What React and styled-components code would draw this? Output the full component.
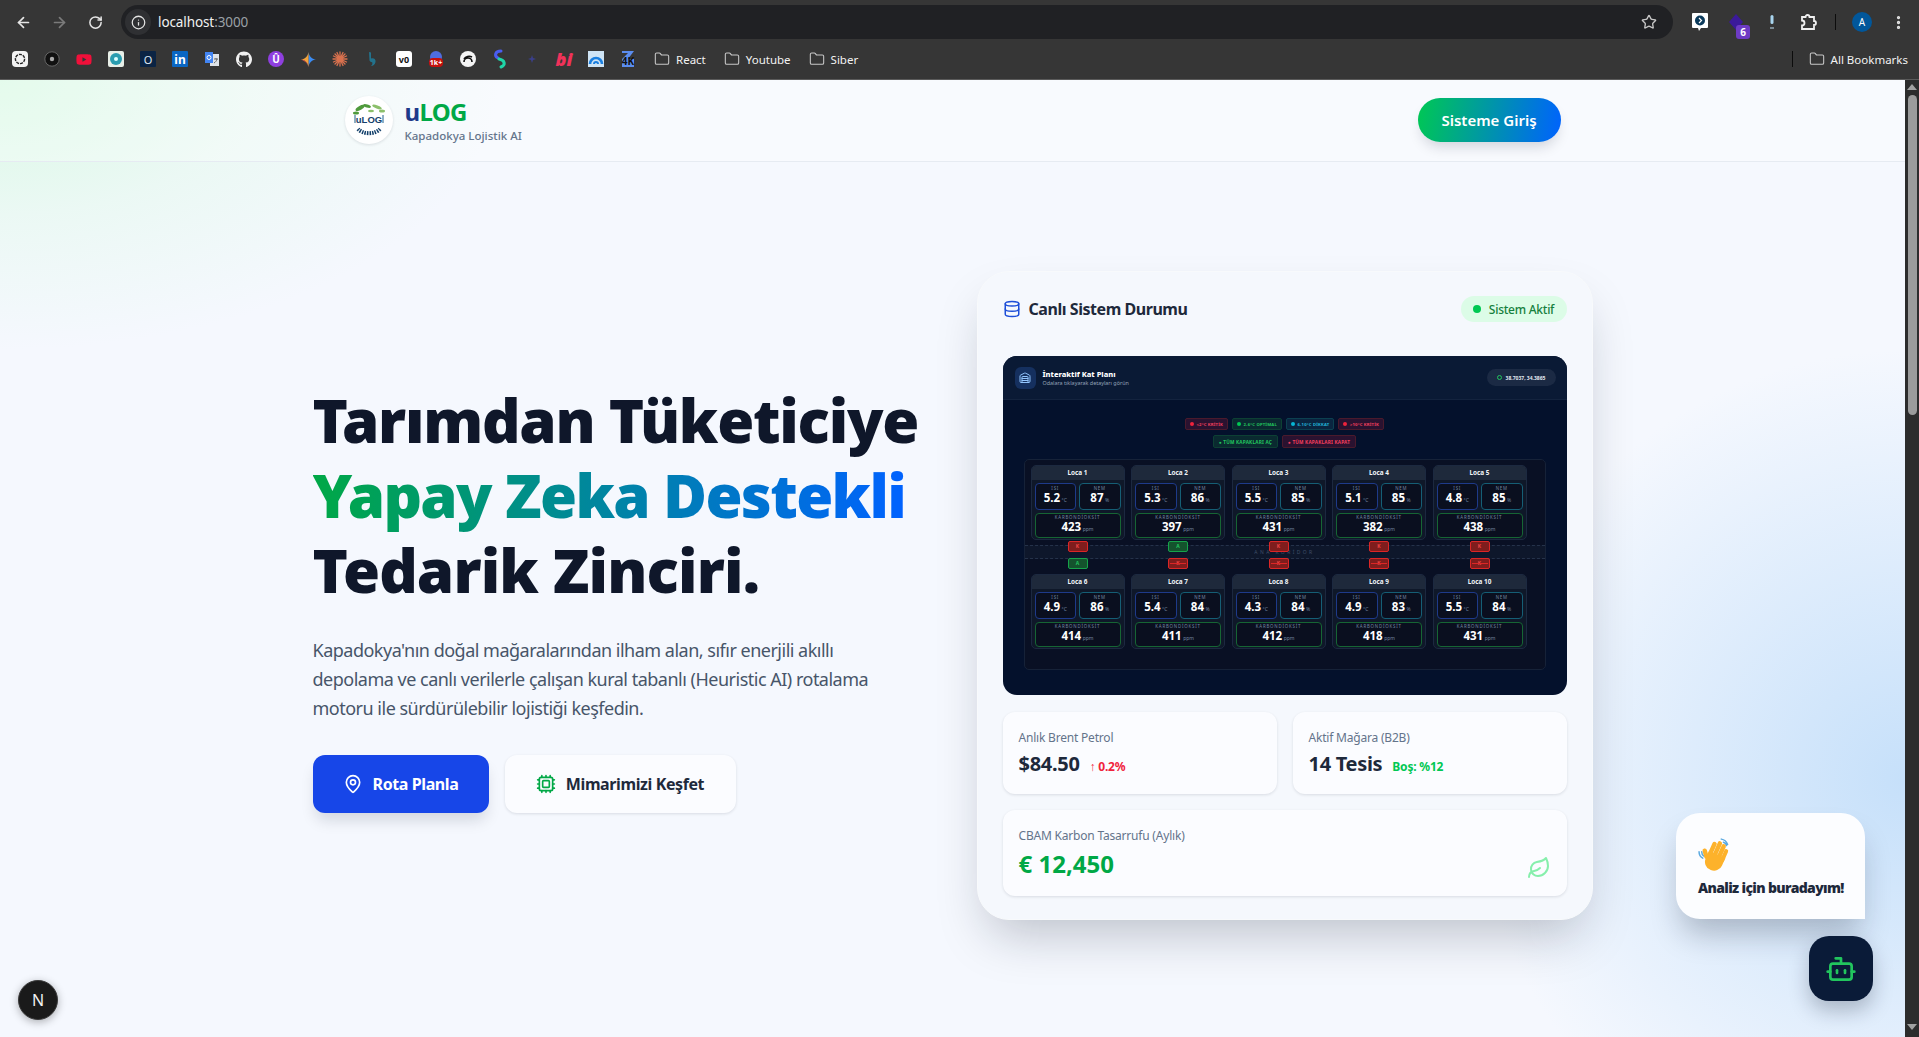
import React from "react";
import styled, { createGlobalStyle } from "styled-components";
import {
  ArrowLeft,
  ArrowRight,
  RotateCw,
  Info,
  Star,
  Folder,
  MapPin,
  Cpu,
  Database,
  Leaf,
  Bot,
  Warehouse,
  EllipsisVertical,
} from "lucide-react";
import { FaGithub, FaYoutube } from "react-icons/fa";

const ROOMS = [
  { name: "Loca 1", temp: "5.2", hum: 87, co2: 423 },
  { name: "Loca 2", temp: "5.3", hum: 86, co2: 397 },
  { name: "Loca 3", temp: "5.5", hum: 85, co2: 431 },
  { name: "Loca 4", temp: "5.1", hum: 85, co2: 382 },
  { name: "Loca 5", temp: "4.8", hum: 85, co2: 438 },
  { name: "Loca 6", temp: "4.9", hum: 86, co2: 414 },
  { name: "Loca 7", temp: "5.4", hum: 84, co2: 411 },
  { name: "Loca 8", temp: "4.3", hum: 84, co2: 412 },
  { name: "Loca 9", temp: "4.9", hum: 83, co2: 418 },
  { name: "Loca 10", temp: "5.5", hum: 84, co2: 431 },
];

const TOP_DOORS = ["K", "A", "K", "K", "K"];
const BOTTOM_DOORS = ["A", "K", "K", "K", "K"];

export default function App() {
  return (
    <Frame>
      <GlobalStyle />
      <BrowserChrome />
      <Viewport>
        <Page>
          <NavBar>
            <NavInner>
              <Brand>
                <LogoCircle>
                  <LogoMark />
                </LogoCircle>
                <BrandText>
                  <BrandName>
                    <span>u</span>LOG
                  </BrandName>
                  <BrandSub>Kapadokya Lojistik AI</BrandSub>
                </BrandText>
              </Brand>
              <LoginButton>Sisteme Giriş</LoginButton>
            </NavInner>
          </NavBar>
          <Main>
            <Hero>
              <HeroCopy>
                <Title>
                  Tarımdan Tüketiciye
                  <br />
                  <GradientText>Yapay Zeka Destekli</GradientText>
                  <br />
                  <TitleEnd>Tedarik Zinciri.</TitleEnd>
                </Title>
                <Lead>
                  Kapadokya'nın doğal mağaralarından ilham alan, sıfır enerjili akıllı
                  depolama ve canlı verilerle çalışan kural tabanlı (Heuristic AI) rotalama
                  motoru ile sürdürülebilir lojistiği keşfedin.
                </Lead>
                <Actions>
                  <PrimaryButton>
                    <MapPin size={20} strokeWidth={2} />
                    Rota Planla
                  </PrimaryButton>
                  <SecondaryButton>
                    <Cpu size={20} strokeWidth={2} color="#00a846" />
                    Mimarimizi Keşfet
                  </SecondaryButton>
                </Actions>
              </HeroCopy>
              <StatusCard />
            </Hero>
          </Main>
          <DevBadge>N</DevBadge>
          <ChatBubble>
            <WaveHand />
            <ChatText>Analiz için buradayım!</ChatText>
          </ChatBubble>
          <ChatButton>
            <Bot size={32} strokeWidth={2} color="#22c55e" />
          </ChatButton>
        </Page>
        <ScrollTrack>
          <ScrollArrow />
          <ScrollThumb />
          <ScrollArrow $down />
        </ScrollTrack>
      </Viewport>
    </Frame>
  );
}

function BrowserChrome() {
  return (
    <ChromeBar>
      <Toolbar>
        <ToolButton>
          <ArrowLeft size={17} strokeWidth={2.4} />
        </ToolButton>
        <ToolButton $dim>
          <ArrowRight size={17} strokeWidth={2.4} />
        </ToolButton>
        <ToolButton>
          <RotateCw size={15} strokeWidth={2.4} />
        </ToolButton>
        <UrlBar>
          <SiteInfo>
            <Info size={15} strokeWidth={2} />
          </SiteInfo>
          <UrlText>
            localhost<span>:3000</span>
          </UrlText>
          <Star size={16} strokeWidth={2} color="#c7c7c7" />
        </UrlBar>
        <Extensions>
          <ToolButton>
            <svg width="16" height="18" viewBox="0 0 16 18">
              <path d="M1 0h14a1 1 0 0 1 1 1v13a1 1 0 0 1-1 1H9l-2 3-1-3H1a1 1 0 0 1-1-1V1a1 1 0 0 1 1-1z" fill="#fff" />
              <circle cx="8" cy="7.500" r="5" fill="#0b3a5b" />
              <path d="M7 5l2.500 2.500L7 10" fill="none" stroke="#fff" strokeWidth="1.200" />
            </svg>
          </ToolButton>
          <ToolButton>
            <svg width="16" height="16" viewBox="0 0 16 16">
              <path d="M8 0l7 8-7 8-7-8z" fill="#3b1a9a" />
            </svg>
            <ExtensionBadge>6</ExtensionBadge>
          </ToolButton>
          <ToolButton>
            <svg width="6" height="14" viewBox="0 0 6 14">
              <rect x="1.500" y="0" width="3" height="9" rx="1.500" fill="#a8d4ee" />
              <rect x="1" y="12" width="4" height="2" fill="#7a8a94" />
            </svg>
          </ToolButton>
          <ToolButton>
            <svg width="17" height="18" viewBox="0 0 17 18" fill="none" stroke="#f0f0f0" strokeWidth="1.800">
              <path d="M2 4h3.500a2 2 0 0 1 4 0H14v4a2 2 0 0 1 0 4v4H2v-3.500a1.800 1.800 0 0 0 0-5z" />
            </svg>
          </ToolButton>
          <ToolDivider />
          <ToolButton>
            <Avatar>A</Avatar>
          </ToolButton>
          <ToolButton>
            <EllipsisVertical size={17} strokeWidth={2.6} />
          </ToolButton>
        </Extensions>
      </Toolbar>
      <BookmarkBar>
        <Favicons />
        <BookmarkFolder>
          <Folder size={16} strokeWidth={1.6} />
          React
        </BookmarkFolder>
        <BookmarkFolder>
          <Folder size={16} strokeWidth={1.6} />
          Youtube
        </BookmarkFolder>
        <BookmarkFolder>
          <Folder size={16} strokeWidth={1.6} />
          Siber
        </BookmarkFolder>
        <AllBookmarks>
          <BookmarkDivider />
          <BookmarkFolder>
            <Folder size={16} strokeWidth={1.6} />
            All Bookmarks
          </BookmarkFolder>
        </AllBookmarks>
      </BookmarkBar>
    </ChromeBar>
  );
}

function Favicons() {
  return (
    <FaviconRow>
      <Fav $bg="#f2f2f2" $radius="4px">
        <svg width="12" height="12" viewBox="0 0 12 12">
          <circle cx="6" cy="6" r="4.600" fill="none" stroke="#222" strokeWidth="1.400" strokeDasharray="3 1" />
        </svg>
      </Fav>
      <Fav>
        <svg width="16" height="16" viewBox="0 0 16 16">
          <circle cx="8" cy="8" r="7.200" fill="#111" stroke="#666" />
          <circle cx="8" cy="8" r="2.200" fill="#aaa" />
        </svg>
      </Fav>
      <Fav $color="#f0103a">
        <FaYoutube size={17} />
      </Fav>
      <Fav $bg="#e8efe8" $radius="2px">
        <svg width="14" height="14" viewBox="0 0 14 14">
          <circle cx="7" cy="7" r="6" fill="#2a9db0" />
          <circle cx="7" cy="7" r="2" fill="#dff" />
        </svg>
      </Fav>
      <Fav $bg="#0b2444" $color="#dfe8f5" $radius="1px" $size="11px" $thin>O</Fav>
      <Fav $bg="#0a66c2" $color="#fff" $radius="1px" $size="12px">in</Fav>
      <Fav>
        <svg width="16" height="16" viewBox="0 0 16 16">
          <path d="M6 3h9v12H6z" fill="#dfe3e8" />
          <path d="M1 1h8v11H1z" fill="#4285f4" />
          <circle cx="5" cy="6.500" r="2" fill="none" stroke="#fff" strokeWidth="1" />
          <path d="M10 8h4M12 7v1M13 8c-.5 2-1.500 3-3 4" fill="none" stroke="#666" strokeWidth="1" />
        </svg>
      </Fav>
      <Fav $color="#f0f0f0">
        <FaGithub size={17} />
      </Fav>
      <Fav $bg="#8f3fe0" $color="#fff" $radius="50%">Û</Fav>
      <Fav>
        <svg width="15" height="15" viewBox="0 0 16 16">
          <path d="M8 0c.6 4.400 3.200 7.400 8 8-4.800.6-7.400 3.600-8 8z" fill="#3b8cf2" />
          <path d="M8 0C7.400 4.400 4.800 7.400 0 8c4.800.6 7.400 3.600 8 8z" fill="#f2a33b" />
          <path d="M8 16c-.6-4.400-3.200-7.400-8-8 4.800 2 7 4 8 8z" fill="#e9554a" />
        </svg>
      </Fav>
      <Fav>
        <svg width="16" height="16" viewBox="0 0 16 16" stroke="#d9714e" strokeWidth="1.300" strokeLinecap="round">
          <path d="M8 1v14M1 8h14M3 3l10 10M13 3L3 13M5 1.500l6 13M11 1.500l-6 13M1.500 5l13 6M14.500 5l-13 6" />
        </svg>
      </Fav>
      <Fav>
        <svg width="10" height="16" viewBox="0 0 10 16">
          <path d="M2 1l2 .5v6c3-1 5 1 4.500 3.500C8 14 5 15.500 4 15c1-1 2-2.500 1-4-1 .5-2-.5-2.500-1.500z" fill="#23728c" />
        </svg>
      </Fav>
      <Fav $bg="#fff" $color="#111" $radius="3px" $size="9px">v0</Fav>
      <Fav>
        <svg width="16" height="16" viewBox="0 0 16 16">
          <circle cx="8" cy="6" r="6" fill="#4e6de0" />
          <rect x="1" y="7" width="14" height="9" rx="4" fill="#c4100d" />
        </svg>
        <FavOverlay>1k+</FavOverlay>
      </Fav>
      <Fav>
        <svg width="16" height="16" viewBox="0 0 16 16">
          <circle cx="8" cy="8" r="8" fill="#f5f5f5" />
          <path d="M4 11a4 4 0 0 1 8 0M4 8a6 6 0 0 1 8-2" fill="none" stroke="#111" strokeWidth="1.600" />
        </svg>
      </Fav>
      <Fav>
        <svg width="16" height="20" viewBox="0 0 16 20" fill="none" strokeWidth="3" strokeLinecap="round">
          <path d="M9 2C3 2 2 7 6 9" stroke="#4a5df0" />
          <path d="M7 10c6 1 7 6 2 8" stroke="#1fd6a8" />
        </svg>
      </Fav>
      <Fav>
        <svg width="8" height="8" viewBox="0 0 8 8">
          <path d="M4 0l1 3 3 1-3 1-1 3-1-3-3-1 3-1z" fill="#3a3f8a" />
        </svg>
      </Fav>
      <Fav $color="#f0325a" $size="18px" $heavy>bi</Fav>
      <Fav>
        <svg width="16" height="18" viewBox="0 0 16 18">
          <rect x="0" y="1" width="16" height="16" fill="#cfe4f5" />
          <path d="M2 14a6 6 0 0 1 12 0" fill="none" stroke="#1a7fe0" strokeWidth="2.600" />
          <path d="M6 14a2 2 0 0 1 4 0" fill="none" stroke="#1a7fe0" strokeWidth="2" />
        </svg>
      </Fav>
      <Fav>
        <svg width="16" height="18" viewBox="0 0 16 18">
          <path d="M2 1h12L8 9H14v8H2V9l6-6H2z" fill="#5b8def" />
        </svg>
        <FavOverlay $dark>4K</FavOverlay>
      </Fav>
    </FaviconRow>
  );
}

function StatusCard() {
  return (
    <Card>
      <CardHeader>
        <CardTitle>
          <Database size={18} strokeWidth={2} color="#1d4ed8" />
          Canlı Sistem Durumu
        </CardTitle>
        <ActivePill>
          <ActiveDot />
          Sistem Aktif
        </ActivePill>
      </CardHeader>
      <FloorPlan />
      <StatGrid>
        <StatBox>
          <StatLabel>Anlık Brent Petrol</StatLabel>
          <StatLine>
            <StatValue>$84.50</StatValue>
            <StatDelta $color="#f0233c">↑ 0.2%</StatDelta>
          </StatLine>
        </StatBox>
        <StatBox>
          <StatLabel>Aktif Mağara (B2B)</StatLabel>
          <StatLine>
            <StatValue>14 Tesis</StatValue>
            <StatDelta $color="#00c853">Boş: %12</StatDelta>
          </StatLine>
        </StatBox>
        <SavingsBox>
          <div>
            <StatLabel>CBAM Karbon Tasarrufu (Aylık)</StatLabel>
            <SavingsValue>€ 12,450</SavingsValue>
          </div>
          <Leaf size={24} strokeWidth={2} color="#86efac" />
        </SavingsBox>
      </StatGrid>
    </Card>
  );
}

function FloorPlan() {
  return (
    <Plan>
      <PlanHeader>
        <PlanHeading>
          <PlanIcon>
            <Warehouse size={12} strokeWidth={2} color="#93c5fd" />
          </PlanIcon>
          <div>
            <PlanTitle>İnteraktif Kat Planı</PlanTitle>
            <PlanSub>Odalara tıklayarak detayları görün</PlanSub>
          </div>
        </PlanHeading>
        <CoordPill>
          <CoordDot />
          38.7037, 34.3865
        </CoordPill>
      </PlanHeader>
      <LegendRow>
        <LegendChip $tone="red">
          <LegendDot $tone="red" />
          &lt;2°C KRİTİK
        </LegendChip>
        <LegendChip $tone="green">
          <LegendDot $tone="green" />
          2-6°C OPTİMAL
        </LegendChip>
        <LegendChip $tone="cyan">
          <LegendDot $tone="cyan" />
          6-10°C DİKKAT
        </LegendChip>
        <LegendChip $tone="red">
          <LegendDot $tone="red" />
          &gt;10°C KRİTİK
        </LegendChip>
      </LegendRow>
      <LegendRow $second>
        <CommandChip $tone="green">● TÜM KAPAKLARI AÇ</CommandChip>
        <CommandChip $tone="red">● TÜM KAPAKLARI KAPAT</CommandChip>
      </LegendRow>
      <PlanFloor>
        <RoomRow>
          {ROOMS.slice(0, 5).map((room) => (
            <Room room={room} key={room.name} />
          ))}
        </RoomRow>
        <Corridor>
          ANA KORİDOR
          <DoorRow $top>
            {TOP_DOORS.map((door, i) => (
              <DoorSlot key={i}>
                <Door $open={door === "A"}>{door}</Door>
              </DoorSlot>
            ))}
          </DoorRow>
          <DoorRow>
            {BOTTOM_DOORS.map((door, i) => (
              <DoorSlot key={i}>
                <Door $open={door === "A"} $strike={door === "K"}>
                  {door}
                </Door>
              </DoorSlot>
            ))}
          </DoorRow>
        </Corridor>
        <RoomRow>
          {ROOMS.slice(5).map((room) => (
            <Room room={room} key={room.name} />
          ))}
        </RoomRow>
      </PlanFloor>
    </Plan>
  );
}

const Room = ({ room }) => (
  <RoomBox>
    <RoomHead>{room.name}</RoomHead>
    <RoomBody>
      <Sensor $color="#1e3a8a">
        <SensorLabel>ISI</SensorLabel>
        <SensorValue>
          {room.temp}
          <small>°C</small>
        </SensorValue>
      </Sensor>
      <Sensor $color="#155e75">
        <SensorLabel>NEM</SensorLabel>
        <SensorValue>
          {room.hum}
          <small>%</small>
        </SensorValue>
      </Sensor>
      <WideSensor $color="#166534">
        <SensorLabel>KARBONDİOKSİT</SensorLabel>
        <SensorValue>
          {room.co2}
          <small>ppm</small>
        </SensorValue>
      </WideSensor>
    </RoomBody>
  </RoomBox>
);

const LogoMark = () => (
  <svg width="36" height="36" viewBox="0 0 36 36">
    <g fill="#4f9a3c">
      <ellipse cx="9" cy="6" rx="5" ry="2" transform="rotate(-30 9 6)" />
      <ellipse cx="16" cy="4" rx="4" ry="1.500" transform="rotate(15 16 4)" />
      <ellipse cx="26" cy="5" rx="5" ry="1.600" fill="#8bbf6a" transform="rotate(20 26 5)" />
      <ellipse cx="31" cy="9" rx="3" ry="1.500" fill="#8bbf6a" />
      <ellipse cx="5" cy="11" rx="3" ry="1.500" />
      <ellipse cx="20" cy="9" rx="3" ry="1.200" fill="#8bbf6a" />
    </g>
    <path d="M4 13v8M32 13v8" stroke="#1f5f8b" strokeWidth="1" />
    <text x="18" y="21" textAnchor="middle" fontSize="9.500" fontWeight="700" fontFamily="Liberation Sans" fill="#14406b">
      uLOG
    </text>
    <path d="M7 27a13 9 0 0 0 22 0" fill="none" stroke="#14406b" strokeWidth="4" strokeDasharray="1.500 1" />
  </svg>
);

const WaveHand = () => (
  <WaveIcon width="36" height="36" viewBox="0 0 34 34">
    <g fill="none" stroke="#5aa9e0" strokeWidth="1.400" strokeLinecap="round">
      <path d="M22 2c3 .5 5 2.500 6 5M24 5c1.500.4 2.500 1.400 3 3" />
      <path d="M1 14c0 3 1.500 5 3.500 6M3.500 14c0 2 .7 3.200 2 4" />
    </g>
    <g transform="rotate(24 17 18)" fill="#fdb22b">
      <rect x="9" y="6" width="4.200" height="15" rx="2.100" />
      <rect x="13.400" y="3.500" width="4.200" height="17" rx="2.100" />
      <rect x="17.800" y="4.500" width="4.200" height="16" rx="2.100" />
      <rect x="22" y="8" width="3.800" height="13" rx="1.900" />
      <rect x="5" y="15" width="4.200" height="10" rx="2.100" transform="rotate(-40 7 20)" />
      <path d="M9 16h16.800v8a8 8 0 0 1-8 8H17a8 8 0 0 1-8-8z" />
    </g>
  </WaveIcon>
);

const GlobalStyle = createGlobalStyle`
  * {
    box-sizing: border-box;
  }

  html,
  body {
    margin: 0;
    height: 100%;
    overflow: hidden;
    font-family: "Noto Sans", "Open Sans", sans-serif;
  }
`;

const Frame = styled.div`
  height: 100vh;
  display: flex;
  flex-direction: column;
  overflow: hidden;
`;

const ChromeBar = styled.header`
  flex: none;
  height: 80px;
  background: #363636;
  border-bottom: 1px solid #5b5b5b;
  color: #e3e3e3;
`;

const Toolbar = styled.div`
  height: 40px;
  padding: 5px 3px 1px 5px;
  display: flex;
  align-items: center;
`;

const ToolButton = styled.div`
  position: relative;
  width: 36px;
  height: 34px;
  flex: none;
  display: flex;
  align-items: center;
  justify-content: center;
  color: ${(p) => (p.$dim ? "#7b7b7b" : "#e6e6e6")};
`;

const UrlBar = styled.div`
  flex: 1;
  height: 34px;
  margin: 0 9px 0 8px;
  padding: 0 16px 0 4px;
  display: flex;
  align-items: center;
  background: #202124;
  border-radius: 17px;
`;

const SiteInfo = styled.div`
  width: 26px;
  height: 26px;
  border-radius: 50%;
  background: #2f3033;
  display: flex;
  align-items: center;
  justify-content: center;
  color: #e3e3e3;
`;

const UrlText = styled.div`
  flex: 1;
  margin-left: 7px;
  font-size: 13.500px;
  letter-spacing: -0.1px;
  color: #f1f1f1;

  span {
    color: #9aa0a6;
  }
`;

const Extensions = styled.div`
  display: flex;
  align-items: center;
`;

const ExtensionBadge = styled.span`
  position: absolute;
  right: 4px;
  bottom: 0;
  width: 14px;
  height: 14px;
  border-radius: 3px;
  background: #6d3bc4;
  color: #fff;
  font-size: 10px;
  font-weight: 700;
  line-height: 14px;
  text-align: center;
`;

const ToolDivider = styled.div`
  width: 1px;
  height: 16px;
  margin: 0 8px 0 9px;
  background: #0c0c0c;
`;

const Avatar = styled.div`
  width: 20px;
  height: 20px;
  border-radius: 50%;
  background: #01579b;
  color: #fff;
  font-size: 10px;
  line-height: 20px;
  text-align: center;
`;

const BookmarkBar = styled.nav`
  height: 38px;
  padding: 0 11px 0 12px;
  display: flex;
  align-items: center;
  gap: 18px;
  font-size: 11.500px;
  color: #f2f2f2;
`;

const FaviconRow = styled.div`
  display: flex;
  align-items: center;
  gap: 16px;
`;

const Fav = styled.div`
  position: relative;
  width: 16px;
  height: 16px;
  flex: none;
  display: flex;
  align-items: center;
  justify-content: center;
  background: ${(p) => p.$bg || "transparent"};
  border-radius: ${(p) => p.$radius || "0"};
  color: ${(p) => p.$color || "#fff"};
  font-size: ${(p) => p.$size || "10px"};
  font-weight: ${(p) => (p.$heavy ? 900 : p.$thin ? 400 : 700)};
  font-style: ${(p) => (p.$heavy ? "italic" : "normal")};
`;

const FavOverlay = styled.span`
  position: absolute;
  left: 0;
  right: 0;
  bottom: ${(p) => (p.$dark ? "-1px" : "0")};
  text-align: center;
  font-size: ${(p) => (p.$dark ? "10px" : "7px")};
  font-weight: 700;
  color: ${(p) => (p.$dark ? "#111" : "#fff")};
`;

const BookmarkFolder = styled.div`
  display: flex;
  align-items: center;
  gap: 6px;
  white-space: nowrap;

  svg {
    color: #c7c7c7;
  }
`;

const AllBookmarks = styled.div`
  margin-left: auto;
  display: flex;
  align-items: center;
  gap: 16px;
`;

const BookmarkDivider = styled.div`
  width: 1px;
  height: 16px;
  background: #0c0c0c;
`;

const Viewport = styled.div`
  flex: 1;
  min-height: 0;
  display: flex;
`;

const Page = styled.div`
  position: relative;
  flex: 1;
  min-width: 0;
  overflow: hidden;
  background:
    radial-gradient(circle 430px at 1905px 700px, #c6e0fa 0%, rgba(198, 224, 250, 0.55) 45%, rgba(198, 224, 250, 0) 100%),
    radial-gradient(ellipse 500px 270px at 0 0, #d9f9e4 0%, rgba(223, 249, 232, 0.45) 50%, rgba(223, 249, 232, 0) 100%),
    #f5f8fe;
`;

const NavBar = styled.div`
  height: 82px;
  padding-bottom: 2px;
  background: rgba(255, 255, 255, 0.3);
  border-bottom: 1px solid #e6ebf2;
`;

const NavInner = styled.div`
  width: 1280px;
  height: 80px;
  margin: 0 auto;
  padding: 0 32px;
  display: flex;
  align-items: center;
  justify-content: space-between;
`;

const Brand = styled.div`
  display: flex;
  align-items: center;
  gap: 12px;
`;

const LogoCircle = styled.div`
  width: 48px;
  height: 48px;
  border-radius: 50%;
  background: #fff;
  box-shadow: 0 1px 3px rgba(15, 23, 42, 0.12);
  display: flex;
  align-items: center;
  justify-content: center;
`;

const BrandText = styled.div`
  display: flex;
  flex-direction: column;
`;

const BrandName = styled.div`
  font-size: 24px;
  font-weight: 700;
  line-height: 30px;
  letter-spacing: -0.7px;
  color: #00a846;

  span {
    color: #1e3a8a;
  }
`;

const BrandSub = styled.div`
  font-size: 11.500px;
  line-height: 17px;
  font-weight: 500;
  color: #64748b;
`;

const LoginButton = styled.button`
  width: 143px;
  height: 44px;
  border: 0;
  border-radius: 22px;
  background: linear-gradient(100deg, #00c853 0%, #0062ff 100%);
  box-shadow: 0 8px 14px -4px rgba(15, 23, 42, 0.18);
  color: #fff;
  font: 600 15px "Noto Sans", sans-serif;
`;

const Main = styled.main`
  height: 867px;
  display: flex;
  align-items: center;
  justify-content: center;
`;

const Hero = styled.section`
  width: 1280px;
  display: grid;
  grid-template-columns: minmax(0, 1fr) minmax(0, 1fr);
  gap: 48px;
  align-items: center;
`;

const HeroCopy = styled.div`
  padding-top: 5px;
`;

const Title = styled.h1`
  margin: 0;
  font-size: 60px;
  line-height: 75px;
  font-weight: 900;
  letter-spacing: -1.250px;
  color: #0f172a;
  white-space: nowrap;
`;

const GradientText = styled.span`
  letter-spacing: -1.650px;
  background: linear-gradient(90deg, #00a846 0%, #0062ff 100%);
  -webkit-background-clip: text;
  background-clip: text;
  color: transparent;
`;

const TitleEnd = styled.span`
  letter-spacing: -0.850px;
`;

const Lead = styled.p`
  width: 590px;
  margin: 28px 0 32px;
  font-size: 18px;
  line-height: 29px;
  letter-spacing: -0.500px;
  color: #475569;
`;

const Actions = styled.div`
  display: flex;
  gap: 16px;
`;

const PrimaryButton = styled.button`
  width: 176px;
  height: 58px;
  border: 0;
  border-radius: 12px;
  background: #1746e8;
  box-shadow: 0 10px 15px -3px rgba(15, 23, 42, 0.15);
  color: #fff;
  display: flex;
  align-items: center;
  justify-content: center;
  gap: 10px;
  font: 700 16px "Noto Sans", sans-serif;
  letter-spacing: -0.400px;
`;

const SecondaryButton = styled(PrimaryButton)`
  width: 231px;
  background: #fbfcff;
  box-shadow: 0 1px 3px rgba(15, 23, 42, 0.12);
  color: #1e293b;
`;

const Card = styled.article`
  height: 649px;
  padding: 24px 25px;
  border-radius: 32px;
  background: #f5f8fd;
  border: 1px solid #f8fafc;
  box-shadow: 0 25px 50px -12px rgba(15, 23, 42, 0.25);
`;

const CardHeader = styled.div`
  height: 26px;
  margin-bottom: 34px;
  display: flex;
  align-items: center;
  justify-content: space-between;
`;

const CardTitle = styled.h3`
  margin: 0;
  display: flex;
  align-items: center;
  gap: 8px;
  font-size: 16px;
  font-weight: 700;
  letter-spacing: -0.450px;
  color: #1e293b;
`;

const ActivePill = styled.div`
  width: 106px;
  height: 26px;
  border-radius: 13px;
  background: #dcfce7;
  display: flex;
  align-items: center;
  justify-content: center;
  gap: 8px;
  font-size: 12px;
  font-weight: 500;
  letter-spacing: -0.250px;
  color: #15803d;
`;

const ActiveDot = styled.span`
  width: 8px;
  height: 8px;
  border-radius: 50%;
  background: #00c853;
`;

const Plan = styled.div`
  height: 339px;
  border-radius: 14px;
  overflow: hidden;
  background: #04112c;
  color: #fff;
`;

const PlanHeader = styled.div`
  height: 44px;
  padding: 0 11px 0 12px;
  display: flex;
  align-items: center;
  justify-content: space-between;
  background: #0a1a35;
  border-bottom: 1px solid #13233e;
`;

const PlanHeading = styled.div`
  display: flex;
  align-items: center;
  gap: 7px;
`;

const PlanIcon = styled.div`
  width: 21px;
  height: 22px;
  border-radius: 6px;
  background: #15305f;
  display: flex;
  align-items: center;
  justify-content: center;
`;

const PlanTitle = styled.div`
  font-size: 7.500px;
  line-height: 10px;
  font-weight: 800;
`;

const PlanSub = styled.div`
  font-size: 5.400px;
  line-height: 8px;
  color: #94a3b8;
`;

const CoordPill = styled.div`
  width: 69px;
  height: 17px;
  border-radius: 9px;
  background: #1b2a44;
  display: flex;
  align-items: center;
  justify-content: center;
  gap: 4px;
  font-size: 5px;
  font-weight: 700;
  color: #e2e8f0;
`;

const CoordDot = styled.span`
  width: 5px;
  height: 5px;
  border-radius: 50%;
  border: 1px solid #22c55e;
`;

const TONES = {
  red: { bg: "#2a1230", border: "#4a1a2c", text: "#f43f5e", dot: "#ef233c" },
  green: { bg: "#0a2a30", border: "#0d4034", text: "#22c55e", dot: "#00c853" },
  cyan: { bg: "#0a2540", border: "#0c4050", text: "#22b8d8", dot: "#06b6d4" },
};

const LegendRow = styled.div`
  margin-top: ${(p) => (p.$second ? "5px" : "18px")};
  height: ${(p) => (p.$second ? "13px" : "12px")};
  display: flex;
  justify-content: center;
  gap: 4px;
`;

const LegendChip = styled.div`
  padding: 0 4px;
  border-radius: 2px;
  display: flex;
  align-items: center;
  gap: 2.500px;
  font-size: 4.200px;
  font-weight: 700;
  letter-spacing: 0.2px;
  background: ${(p) => TONES[p.$tone].bg};
  border: 1px solid ${(p) => TONES[p.$tone].border};
  color: ${(p) => TONES[p.$tone].text};
`;

const LegendDot = styled.span`
  width: 4px;
  height: 4px;
  border-radius: 50%;
  background: ${(p) => TONES[p.$tone].dot};
`;

const CommandChip = styled(LegendChip)`
  padding: 0 5px;
  font-size: 4.700px;
`;

const PlanFloor = styled.div`
  width: 522px;
  height: 211px;
  margin: 11px 0 0 21px;
  padding: 5px 20px 0 6px;
  border: 1px solid #162238;
  border-radius: 5px;
  background: #091024;
`;

const RoomRow = styled.div`
  display: grid;
  grid-template-columns: repeat(5, 94px);
  column-gap: 6.500px;
`;

const RoomBox = styled.div`
  height: 75px;
  border: 1px solid #1c2940;
  border-radius: 5px;
  overflow: hidden;
  background: #0f1829;
`;

const RoomHead = styled.div`
  height: 13.500px;
  background: #1e293b;
  font-size: 6.400px;
  line-height: 13.500px;
  font-weight: 700;
  text-align: center;
  color: #f1f5f9;
`;

const RoomBody = styled.div`
  padding: 3px 3px;
  display: grid;
  grid-template-columns: 1fr 1fr;
  grid-template-rows: 27px 25px;
  gap: 3px;
`;

const Sensor = styled.div`
  border: 1px solid ${(p) => p.$color};
  border-radius: 4px;
  background: #0a0f1f;
  display: flex;
  flex-direction: column;
  align-items: center;
  justify-content: center;
`;

const WideSensor = styled(Sensor)`
  grid-column: span 2;
`;

const SensorLabel = styled.div`
  font-size: 4.400px;
  line-height: 6px;
  letter-spacing: 0.800px;
  color: #7587a0;
`;

const SensorValue = styled.div`
  font-size: 11.500px;
  line-height: 14px;
  font-weight: 700;
  color: #fff;

  small {
    margin-left: 1.500px;
    font-size: 5px;
    font-weight: 400;
    color: #7587a0;
  }
`;

const Corridor = styled.div`
  position: relative;
  height: 14px;
  margin: 5px -20px 15px -6px;
  border-top: 1px dashed #25324a;
  border-bottom: 1px dashed #25324a;
  background: #0e172b;
  display: flex;
  align-items: center;
  justify-content: center;
  font-size: 5px;
  letter-spacing: 2.400px;
  color: #3f4e68;
`;

const DoorRow = styled.div`
  position: absolute;
  left: 6px;
  ${(p) => (p.$top ? "top: -5px;" : "bottom: -11px;")}
  display: grid;
  grid-template-columns: repeat(5, 94px);
  column-gap: 6.500px;
`;

const DoorSlot = styled.div`
  display: flex;
  justify-content: center;
`;

const Door = styled.div`
  position: relative;
  width: 20px;
  height: 11px;
  border-radius: 2px;
  border: 1px solid ${(p) => (p.$open ? "#16a34a" : "#dc2626")};
  background: ${(p) => (p.$open ? "#14532d" : "#7f1d1d")};
  color: ${(p) => (p.$open ? "#22c55e" : "#ef4444")};
  font-size: 5px;
  line-height: 9px;
  font-weight: 700;
  letter-spacing: 0;
  text-align: center;

  ${(p) =>
    p.$strike &&
    `&::after {
      content: "";
      position: absolute;
      left: 1px;
      right: 1px;
      top: 4px;
      height: 1px;
      background: #dc2626;
    }`}
`;

const StatGrid = styled.div`
  margin-top: 17px;
  display: grid;
  grid-template-columns: 1fr 1fr;
  gap: 16px;
`;

const StatBox = styled.div`
  height: 82px;
  padding: 18px 16px 16px;
  border-radius: 12px;
  background: #fbfcff;
  box-shadow: 0 1px 3px rgba(15, 23, 42, 0.12);
`;

const SavingsBox = styled(StatBox)`
  grid-column: span 2;
  height: 86px;
  padding-top: 16px;
  display: flex;
  justify-content: space-between;
  align-items: flex-end;
`;

const StatLabel = styled.div`
  font-size: 12px;
  line-height: 16px;
  letter-spacing: -0.200px;
  color: #64748b;
`;

const StatLine = styled.div`
  margin-top: 4px;
  display: flex;
  align-items: baseline;
  gap: 10px;
`;

const StatValue = styled.div`
  font-size: 20px;
  line-height: 28px;
  font-weight: 700;
  letter-spacing: -0.300px;
  color: #1e293b;
`;

const StatDelta = styled.div`
  font-size: 12px;
  font-weight: 700;
  letter-spacing: -0.200px;
  color: ${(p) => p.$color};
`;

const SavingsValue = styled.div`
  margin-top: 4px;
  font-size: 24px;
  line-height: 32px;
  font-weight: 700;
  color: #00a846;
`;

const DevBadge = styled.div`
  position: absolute;
  left: 18px;
  bottom: 17px;
  width: 40px;
  height: 40px;
  border-radius: 50%;
  background: #1a1a1a;
  border: 1px solid #3a3a3a;
  box-shadow: 0 2px 8px rgba(0, 0, 0, 0.3);
  display: flex;
  align-items: center;
  justify-content: center;
  color: #f2f2f2;
  font-size: 16px;
`;

const ChatBubble = styled.div`
  position: absolute;
  left: 1676px;
  top: 733px;
  width: 189px;
  height: 106px;
  padding: 24px 22px;
  border-radius: 24px 24px 0 24px;
  background: #fcfdff;
  box-shadow: 0 20px 30px -5px rgba(15, 23, 42, 0.25);
`;

const WaveIcon = styled.svg`
  display: block;
  margin-bottom: 6px;
`;

const ChatText = styled.div`
  font-size: 14px;
  line-height: 18px;
  font-weight: 900;
  letter-spacing: -0.650px;
  white-space: nowrap;
  color: #1e293b;
`;

const ChatButton = styled.div`
  position: absolute;
  left: 1809px;
  top: 856px;
  width: 64px;
  height: 65px;
  border-radius: 20px;
  background: #0a1b38;
  box-shadow: 0 10px 20px rgba(15, 23, 42, 0.25);
  display: flex;
  align-items: center;
  justify-content: center;
`;

const ScrollTrack = styled.aside`
  flex: none;
  width: 14px;
  background: #2c2c2c;
  display: flex;
  flex-direction: column;
  align-items: center;
  padding: 4px 0;
`;

const ScrollArrow = styled.div`
  width: 0;
  height: 0;
  margin-top: ${(p) => (p.$down ? "auto" : "0")};
  margin-bottom: 3px;
  border-left: 5px solid transparent;
  border-right: 5px solid transparent;
  ${(p) => (p.$down ? "border-top: 6px solid #a1a1a1;" : "border-bottom: 6px solid #a1a1a1;")}
`;

const ScrollThumb = styled.div`
  width: 9px;
  height: 320px;
  margin-top: 2px;
  border-radius: 5px;
  background: #9b9b9b;
`;
